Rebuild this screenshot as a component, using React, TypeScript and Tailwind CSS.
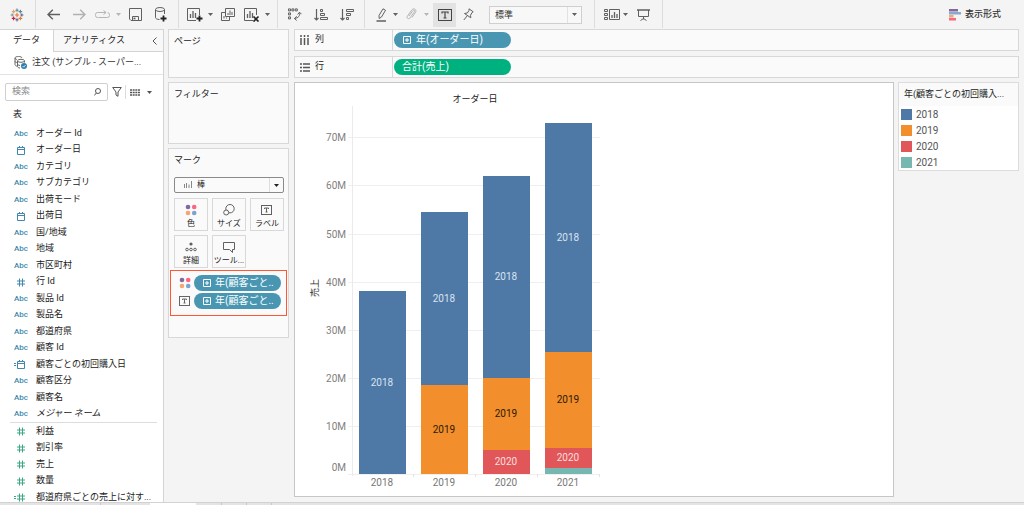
import type { ReactNode } from "react";

type IconProps = { w: number; h: number; className?: string; children: ReactNode };

function Icon({ w, h, className = "", children }: IconProps) {
  return (
    <svg
      width={w}
      height={h}
      viewBox={`0 0 ${w} ${h}`}
      fill="none"
      stroke="currentColor"
      strokeWidth="1"
      aria-hidden="true"
      className={`shrink-0 ${className}`}
    >
      {children}
    </svg>
  );
}

const Caret = ({ className = "" }: { className?: string }) => (
  <Icon w={5} h={3} className={className}>
    <path d="M0 0h5L2.5 3z" fill="currentColor" stroke="none" />
  </Icon>
);

const plusPoints: [number, number, number, string][] = [
  [7, 7, 2.2, "#e8762d"],
  [7, 2.2, 1.6, "#5b879b"],
  [7, 11.8, 1.6, "#5b6591"],
  [2.2, 7, 1.6, "#7099a5"],
  [11.8, 7, 1.6, "#5b6591"],
  [3.6, 3.6, 1.8, "#e8a05a"],
  [10.4, 3.6, 1.8, "#5b879b"],
  [3.6, 10.4, 1.8, "#c72035"],
  [10.4, 10.4, 1.8, "#e8762d"],
];

const Logo = () => (
  <Icon w={14} h={14}>
    {plusPoints.map(([x, y, r, c]) => (
      <path key={`${x}-${y}`} d={`M${x - r} ${y}h${r * 2}M${x} ${y - r}v${r * 2}`} stroke={c} strokeWidth="1.1" />
    ))}
  </Icon>
);

const ColorDots = () => (
  <Icon w={12} h={12}>
    <g stroke="none">
      <circle cx="3" cy="3" r="2.3" fill="#85689b" />
      <circle cx="9.2" cy="3" r="2.3" fill="#fb6680" />
      <circle cx="3" cy="9" r="2.3" fill="#f6a571" />
      <circle cx="9.2" cy="9" r="2.3" fill="#7ba3d0" />
    </g>
  </Icon>
);

const TextBox = () => (
  <Icon w={12} h={10}>
    <rect x="0.5" y="0.5" width="10" height="9" />
    <path d="M3.5 4V3h4v1M5.5 3v4M4.5 7h2" />
  </Icon>
);

function Separator() {
  return <span className="h-7 w-px shrink-0 self-start bg-[#dcdcdc]" />;
}

type ToolProps = { label: string; className?: string; children: ReactNode };
function Tool({ label, className = "", children }: ToolProps) {
  return (
    <button type="button" aria-label={label} className={`flex h-6 shrink-0 items-center ${className}`}>
      {children}
    </button>
  );
}

function Toolbar() {
  return (
    <header className="flex h-[29px] shrink-0 items-center text-[#606060]">
      <Tool label="スタート ページ" className="w-[35px] pl-2.5"><Logo /></Tool>
      <Separator />
      <Tool label="元に戻す" className="ml-[11px] w-3">
        <Icon w={13} h={11}><path d="M13 5.5H1M5.8 .7L1 5.5l4.8 4.8" strokeWidth="1.4" /></Icon>
      </Tool>
      <Tool label="やり直し" className="ml-3.5 w-3 text-[#b0b0b0]">
        <Icon w={13} h={11}><path d="M0 5.5h12M7.2 .7L12 5.5l-4.8 4.8" strokeWidth="1.3" /></Icon>
      </Tool>
      <Tool label="再生" className="ml-2.5 w-[26px] justify-between text-[#b5b5b5]">
        <Icon w={15} h={10}><path d="M3.5 7.500H2.500a2 2 0 0 1-2-2v-1a2 2 0 0 1 2-2h8.500M8.500 .5l2.500 2-2.500 2M12.500 2.700a2 2 0 0 1 2 2v.8a2 2 0 0 1-2 2H3.500" /></Icon>
        <Caret />
      </Tool>
      <Tool label="保存" className="ml-2 w-[13px]">
        <Icon w={13} h={13}>
          <path d="M.5 .5h12v12H2L.5 11z" />
          <path d="M3.5 12V8.5h6V12" />
          <path d="M4.5 10.5h2" strokeWidth="1.6" />
        </Icon>
      </Tool>
      <Tool label="新しいデータ ソース" className="ml-[13px] w-3">
        <Icon w={12} h={15}>
          <ellipse cx="5" cy="2.5" rx="4.5" ry="2" />
          <path d="M.5 2.5v8c0 1 1.5 1.9 4 2M9.500 2.500V7" />
          <path d="M8.500 8.500v6M5.500 11.500h6" stroke="#222" strokeWidth="1.8" />
        </Icon>
      </Tool>
      <span className="w-[11px]" />
      <Separator />
      <Tool label="新しいワークシート" className="ml-2 w-[26px] justify-between">
        <Icon w={16} h={14}>
          <path d="M9 12.5H.5V.5h12V7" />
          <path d="M3.5 10V6M6 10V3M8.500 10V5" strokeWidth="1.3" />
          <path d="M12.500 7.500v6M9.500 10.500h6" stroke="#222" strokeWidth="1.8" />
        </Icon>
        <Caret />
      </Tool>
      <Tool label="複製" className="ml-2 w-3.5">
        <Icon w={14} h={14}>
          <path d="M4.5 .5h9v8h-9z" />
          <path d="M4.500 4.500h-4v8h8v-4" />
          <path d="M7 7V5M9 7V2.500M11 7V4M3 10.500V8M5.500 10.500v-1" />
        </Icon>
      </Tool>
      <Tool label="シートのクリア" className="ml-[9px] w-[26px] justify-between">
        <Icon w={16} h={14}>
          <path d="M9 12.5H.5V.5h12V7" />
          <path d="M3.5 10V6M6 10V3M8.500 10V5" strokeWidth="1.3" />
          <path d="M9.500 8.500l5 5M14.500 8.500l-5 5" stroke="#222" strokeWidth="1.7" />
        </Icon>
        <Caret />
      </Tool>
      <span className="w-[7px]" />
      <Separator />
      <Tool label="行と列の交換" className="ml-2.5 w-3.5">
        <Icon w={14} h={13}>
          <path d="M.5 .9h2v2h-2zM3.900 .9h2v2h-2zM7.300 .9h2v2h-2zM.5 4.900h2v2h-2zM.5 8.900h2v2h-2z" />
          <path d="M11.500 4.500c.8 3-1 5.500-5 6M9.700 6.500l1.800-2.300 2 2M8.700 8.300l-2.300 2.200 2.300 2" />
        </Icon>
      </Tool>
      <Tool label="昇順で並べ替え" className="ml-3 w-3.5">
        <Icon w={14} h={13}>
          <path d="M2.500 1v11M.5 10l2 2 2-2" strokeWidth="1.200" />
          <path d="M6.500 1.500h2v2h-2zM6.500 5.500h4v2h-4zM6.500 9.500h7v2h-7z" />
        </Icon>
      </Tool>
      <Tool label="降順で並べ替え" className="ml-3 w-3.5">
        <Icon w={14} h={13}>
          <path d="M2.500 1v11M.5 10l2 2 2-2" strokeWidth="1.200" />
          <path d="M6.500 1.500h7v2h-7zM6.500 5.500h4v2h-4zM6.500 9.500h2v2h-2z" />
        </Icon>
      </Tool>
      <span className="w-2.5" />
      <Separator />
      <Tool label="ハイライト" className="ml-[11px] w-[22px] justify-between">
        <Icon w={11} h={14}>
          <path d="M3 7.500L7 .8l2.500 1.500-4 6.700-2.300 1.500z" />
          <path d="M.5 13h9.500" strokeWidth="1.500" />
        </Icon>
        <Caret />
      </Tool>
      <Tool label="グループ" className="ml-2 w-[23px] justify-between text-[#b5b5b5]">
        <Icon w={11} h={13}>
          <path d="M3 8l4-5.500c.7-1 2.200 0 1.500 1L4 10c-1.300 1.600-3.800.2-2.700-1.600l4.500-6.500C7.500-.3 11 1.500 9.700 4L6 9.500" />
        </Icon>
        <Caret />
      </Tool>
      <Tool label="マーク ラベルの表示" className="ml-1 w-[23px] justify-center bg-[#e2e2e2] text-[#444]">
        <Icon w={14} h={12}>
          <rect x=".5" y=".5" width="13" height="11" />
          <path d="M4 4.500V3h6v1.500M7 3v6M5.500 9h3" strokeWidth="1.200" />
        </Icon>
      </Tool>
      <Tool label="軸の固定" className="ml-[7px] w-[11px]">
        <Icon w={11} h={13}>
          <path d="M6 .8l4.200 3-1.200.7-1.500 2.800.3 2.500L1.500 5.500l2.800-.5 1.700-2.500zM4.500 7.500L.8 12" />
        </Icon>
      </Tool>
      <div className="relative ml-[15px] h-[18px] w-[93px] shrink-0 border border-[#cfcfcf] bg-[#f8f8f8]">
        <select aria-label="表示サイズ" className="block h-4 w-full appearance-none px-[5px] text-[9px] leading-4 text-[#333]">
          <option>標準</option>
        </select>
        <span className="pointer-events-none absolute inset-y-0 right-0 flex w-3.5 items-center justify-center border-l border-[#e2e2e2]">
          <Caret />
        </span>
      </div>
      <span className="w-3" />
      <Separator />
      <Tool label="カードの表示/非表示" className="ml-[9px] w-6 justify-between">
        <Icon w={16} h={12}>
          <path d="M.5 .5h3v2h-3zM.5 4.500h3v2h-3zM.5 8.500h3v2h-3z" />
          <path d="M5.500 .5h10v10h-10z" />
          <path d="M8 9V6M10.500 9V3M13 9V5" strokeWidth="1.300" />
        </Icon>
        <Caret />
      </Tool>
      <Tool label="プレゼンテーション モード" className="ml-[9px] w-[13px]">
        <Icon w={13} h={12}>
          <path d="M0 1h13" strokeWidth="1.500" />
          <path d="M1.500 1v6.500h10V1M6.500 7.500v3M3.500 11.500l3-2 3 2" />
        </Icon>
      </Tool>
      <span className="w-3" />
      <Separator />
      <button type="button" className="mr-[23px] ml-auto flex h-6 items-center gap-1 text-[9px] font-medium text-[#333]">
        <Icon w={12} h={12}>
          <g stroke="none">
            <path d="M0 0h9v2.500H0z" fill="#85689b" />
            <path d="M0 3h12v2.500H0z" fill="#86a9d0" />
            <path d="M0 6h4.500v2.500H0z" fill="#f6a571" />
            <path d="M0 9h7v2.500H0z" fill="#fb6680" />
          </g>
        </Icon>
        表示形式
      </button>
    </header>
  );
}

type Kind = "text" | "date" | "calcDate" | "number" | "calcNumber";
type Field = { name: string; kind: Kind; italic?: boolean };

const dimensions: Field[] = [
  { name: "オーダー Id", kind: "text" },
  { name: "オーダー日", kind: "date" },
  { name: "カテゴリ", kind: "text" },
  { name: "サブカテゴリ", kind: "text" },
  { name: "出荷モード", kind: "text" },
  { name: "出荷日", kind: "date" },
  { name: "国/地域", kind: "text" },
  { name: "地域", kind: "text" },
  { name: "市区町村", kind: "text" },
  { name: "行 Id", kind: "number" },
  { name: "製品 Id", kind: "text" },
  { name: "製品名", kind: "text" },
  { name: "都道府県", kind: "text" },
  { name: "顧客 Id", kind: "text" },
  { name: "顧客ごとの初回購入日", kind: "calcDate" },
  { name: "顧客区分", kind: "text" },
  { name: "顧客名", kind: "text" },
  { name: "メジャー ネーム", kind: "text", italic: true },
];

const measures: Field[] = [
  { name: "利益", kind: "number" },
  { name: "割引率", kind: "number" },
  { name: "売上", kind: "number" },
  { name: "数量", kind: "number" },
  { name: "都道府県ごとの売上に対す...", kind: "calcNumber" },
];

function FieldIcon({ kind }: { kind: Kind }) {
  if (kind === "text") return <span className="text-[8px] font-medium">Abc</span>;
  const calculated = kind === "calcDate" || kind === "calcNumber";
  const date = kind === "date" || kind === "calcDate";
  return (
    <Icon w={14} h={9}>
      {calculated && <path d="M0 3.500h2M0 5.500h2" />}
      {date ? (
        <path d="M3.500 1.500h7v7h-7zM3.500 3.500h7M5.500 0v2M8.500 0v2" />
      ) : (
        <path d="M3 3h8M3 6h8M5.500 .5v8M8.500 .5v8" />
      )}
    </Icon>
  );
}

function FieldList({ fields, tone }: { fields: Field[]; tone: string }) {
  return (
    <ul>
      {fields.map((f) => (
        <li key={f.name} className="flex items-center odd:h-[17px] even:h-4">
          <span className={`flex w-[42px] shrink-0 justify-center ${tone}`}>
            <FieldIcon kind={f.kind} />
          </span>
          <span className={`-ml-1.5 whitespace-nowrap ${f.italic ? "italic" : ""}`}>{f.name}</span>
        </li>
      ))}
    </ul>
  );
}

function DataPane() {
  return (
    <aside className="flex w-[164px] shrink-0 flex-col overflow-hidden border-t border-r border-[#d4d4d4] bg-white text-[9px] text-[#222]">
      <div className="flex h-[22px] shrink-0">
        <button type="button" className="w-[53px] shrink-0 text-[#222]">データ</button>
        <button type="button" className="flex flex-1 items-center justify-between border-b border-l border-[#d4d4d4] bg-[#f8f8f8] pr-1.5 pl-[9px] text-[#222]">
          アナリティクス
          <Icon w={5} h={8} className="text-[#555]"><path d="M4.500 .5L1 4l3.500 3.500" /></Icon>
        </button>
      </div>
      <div className="flex h-[23px] shrink-0 items-center gap-1 border-b border-[#e4e4e4] pl-3.5 text-[#333]">
        <Icon w={14} h={14} className="text-[#666]">
          <path d="M1 2v6.500c0 1 1 1.500 2 1.700M1 2c0-2 7-2 7 0M1 2c0 1 1 1.400 2 1.500M1 5c0 1 1 1.400 2 1.500" />
          <ellipse cx="7" cy="4.800" rx="3.500" ry="1.500" />
          <path d="M3.500 5v5.500c0 .8 1 1.400 2.500 1.500M10.500 5v1.500M3.500 8c0 .8 1 1.300 2.500 1.400" />
          <circle cx="10" cy="10" r="3" fill="#2f7fae" stroke="none" />
          <path d="M8.500 10l1.200 1.200L11.600 9" stroke="#fff" strokeWidth=".8" />
        </Icon>
        <span className="whitespace-nowrap">注文 (サンプル - スーパー...</span>
      </div>
      <div className="mt-2 flex h-[18px] shrink-0 items-center pl-[5px] text-[#555]">
        <label className="flex h-full w-[103px] items-center rounded-xs border border-[#cfcfcf] pr-1.5 pl-1.5">
          <input type="text" aria-label="検索" placeholder="検索" className="w-0 flex-1 text-[9px] outline-none placeholder:text-[#888]" />
          <Icon w={7} h={8}><circle cx="4" cy="3" r="2.500" /><path d="M2.300 5L.3 7.500" /></Icon>
        </label>
        <button type="button" aria-label="フィルター" className="ml-0.5 flex w-[14px] justify-center">
          <Icon w={10} h={10}><path d="M.7 .5h8.600L6 5v4.300L4 8V5z" /></Icon>
        </button>
        <span className="ml-px h-3.5 w-px bg-[#ddd]" />
        <button type="button" aria-label="表示オプション" className="ml-1 flex items-center gap-[7px]">
          <Icon w={10} h={7}><path d="M0 1h10M0 3.500h10M0 6h10" strokeDasharray="2 .66" strokeWidth="1.500" /></Icon>
          <Caret />
        </button>
      </div>
      <h2 className="mt-[5px] h-[17px] shrink-0 pl-[13px] text-[9px] leading-[17px]">表</h2>
      <div className="pt-0.5">
        <FieldList fields={dimensions} tone="text-[#4088ac]" />
        <hr className="mr-1.5 ml-2.5 border-[#ddd]" />
        <FieldList fields={measures} tone="text-[#3aa981]" />
      </div>
    </aside>
  );
}

function ExpandMark() {
  return (
    <Icon w={8} h={8}>
      <path d="M.5 .5h7v7h-7zM2 4h4M4 2v4" />
    </Icon>
  );
}

function Card({ title, className, children }: { title: string; className: string; children?: ReactNode }) {
  return (
    <section className={`border border-[#d8d8d8] bg-[#fafafa] pr-1 pl-[5px] ${className}`}>
      <h2 className="pt-1 text-[9px] leading-[14px] text-[#222]">{title}</h2>
      {children}
    </section>
  );
}

function MarkButton({ label, children }: { label: string; children: ReactNode }) {
  return (
    <button type="button" className="flex h-[33px] flex-col items-center justify-between border border-[#d8d8d8] bg-[#fafafa] pt-[5px] text-[#606060]">
      <span className="flex h-3 items-center">{children}</span>
      <span className="text-[8px] leading-3 whitespace-nowrap text-[#222]">{label}</span>
    </button>
  );
}

function MarkPill({ children }: { children: ReactNode }) {
  return (
    <div className="flex h-4 items-center gap-[3px] pr-[5px] pl-2 text-[#666]">
      {children}
      <span className="flex h-4 flex-1 items-center gap-1 rounded-full bg-[#4996b2] pl-[9px] text-[10px] leading-4 whitespace-nowrap text-white">
        <ExpandMark />
        年(顧客ごと..
      </span>
    </div>
  );
}

function MarksColumn() {
  return (
    <div className="flex w-[121px] shrink-0 flex-col gap-1">
      <Card title="ページ" className="h-[49px]" />
      <Card title="フィルター" className="h-[62px]" />
      <Card title="マーク" className="h-[190px]">
        <div className="relative mt-2.5 h-4 rounded-xs border border-[#8a8a8a] bg-[#fafafa]">
          <select aria-label="マーク タイプ" className="block h-3.5 w-full appearance-none pl-[22px] text-[8px] leading-3.5 text-[#222]">
            <option>棒</option>
          </select>
          <Icon w={8} h={7} className="pointer-events-none absolute top-[3px] left-[9px] text-[#888]">
            <path d="M.5 7V3M2.500 7V2M5 7V3.500M7.500 7V0" />
          </Icon>
          <span className="pointer-events-none absolute inset-y-0 right-0 flex w-3.5 items-center justify-center border-l border-[#ddd] text-[#222]">
            <Caret />
          </span>
        </div>
        <div className="mt-[5px] grid grid-cols-3 gap-1">
          <MarkButton label="色"><ColorDots /></MarkButton>
          <MarkButton label="サイズ">
            <Icon w={12} h={12}>
              <circle cx="7" cy="4.700" r="4.200" />
              <circle cx="3.200" cy="8.500" r="2.500" fill="#fafafa" />
            </Icon>
          </MarkButton>
          <MarkButton label="ラベル"><TextBox /></MarkButton>
          <MarkButton label="詳細">
            <Icon w={12} h={10}>
              <circle cx="6" cy="2" r="1.600" fill="currentColor" stroke="none" />
              <circle cx="2" cy="7.500" r="1.300" />
              <circle cx="6" cy="7.500" r="1.300" />
              <circle cx="10" cy="7.500" r="1.300" />
            </Icon>
          </MarkButton>
          <MarkButton label="ツール...">
            <Icon w={12} h={11}><path d="M.5 .5h11v7H9.500v3l-3-3h-6z" /></Icon>
          </MarkButton>
        </div>
        <div className="-mr-[3px] -ml-1 mt-0.5 flex flex-col gap-0.5 border border-[#ff5733] pt-1 pb-1.5">
          <MarkPill><ColorDots /></MarkPill>
          <MarkPill><TextBox /></MarkPill>
        </div>
      </Card>
    </div>
  );
}

function Shelf({ label, icon, children }: { label: string; icon: ReactNode; children: ReactNode }) {
  return (
    <div className="flex h-[22px] items-stretch border border-[#d8d8d8] bg-[#fafafa]">
      <div className="flex w-[98px] items-center border-r border-[#d8d8d8] pl-[5px] text-[9px] text-[#222]">
        <span className="w-[15px] text-[#555]">{icon}</span>
        {label}
      </div>
      <div className="flex items-center pl-px">{children}</div>
    </div>
  );
}

const BLUE = "#4e79a7";
const ORANGE = "#f28e2b";
const RED = "#e15759";
const TEAL = "#76b7b2";

type Segment = { year: string; value: number; color: string; ink?: string };
const stacks: { year: string; segments: Segment[] }[] = [
  { year: "2018", segments: [{ year: "2018", value: 38, color: BLUE, ink: "#d9e3ee" }] },
  {
    year: "2019",
    segments: [
      { year: "2019", value: 18.5, color: ORANGE, ink: "#2b1a08" },
      { year: "2018", value: 36, color: BLUE, ink: "#d9e3ee" },
    ],
  },
  {
    year: "2020",
    segments: [
      { year: "2020", value: 4.9, color: RED, ink: "#fadfdf" },
      { year: "2019", value: 15, color: ORANGE, ink: "#2b1a08" },
      { year: "2018", value: 42.1, color: BLUE, ink: "#d9e3ee" },
    ],
  },
  {
    year: "2021",
    segments: [
      { year: "2021", value: 1.2, color: TEAL },
      { year: "2020", value: 4.3, color: RED, ink: "#fadfdf" },
      { year: "2019", value: 19.9, color: ORANGE, ink: "#2b1a08" },
      { year: "2018", value: 47.6, color: BLUE, ink: "#d9e3ee" },
    ],
  },
];

const LEFT = 57;
const BASE = 391;
const STEP = 62;
const PER_M = 4.81;

function SalesChart() {
  const ticks = [0, 10, 20, 30, 40, 50, 60, 70];
  return (
    <svg width="310" height="413" viewBox="0 0 310 413" className="block text-[10px]" role="img" aria-label="オーダー日ごとの売上">
      <text x="180" y="19" textAnchor="middle" fontSize="9" fill="#222">オーダー日</text>
      <text transform="translate(23 205) rotate(-90)" textAnchor="middle" fontSize="9" fill="#333">売上</text>
      {ticks.map((t) => {
        const y = Math.round(BASE - t * PER_M);
        return (
          <g key={t}>
            <path d={`M${LEFT - 4} ${y + 0.5}h252`} stroke="#efefef" />
            <text x="51" y={t === 0 ? y - 3 : y + 4} textAnchor="end" fill="#808080">{t}M</text>
          </g>
        );
      })}
      <path d={`M${LEFT + 0.5} 23V${BASE + 2}`} stroke="#ebebeb" />
      {stacks.map((stack, i) => {
        const x = LEFT + 7 + i * STEP;
        let total = 0;
        return (
          <g key={stack.year}>
            <path d={`M${LEFT + (i + 1) * STEP - 0.5} ${BASE}v3`} stroke="#e2e2e2" />
            {stack.segments.map((s) => {
              const bottom = Math.round(BASE - total * PER_M);
              total += s.value;
              const top = Math.round(BASE - total * PER_M);
              return (
                <g key={s.year}>
                  <rect x={x} y={top} width="47" height={bottom - top} fill={s.color} />
                  {s.ink && (
                    <text x={x + 23} y={Math.round((top + bottom) / 2) + 3} textAnchor="middle" fill={s.ink}>{s.year}</text>
                  )}
                </g>
              );
            })}
            <text x={x + 23} y={BASE + 12} textAnchor="middle" fill="#777">{stack.year}</text>
          </g>
        );
      })}
    </svg>
  );
}

function Legend() {
  const items: [string, string][] = [
    ["2018", "bg-[#4e79a7]"],
    ["2019", "bg-[#f28e2b]"],
    ["2020", "bg-[#e15759]"],
    ["2021", "bg-[#76b7b2]"],
  ];
  return (
    <section className="w-[121px] shrink-0 self-start border border-[#dcdcdc] bg-white">
      <h2 className="h-[23px] bg-[#fafafa] pl-[5px] text-[9px] leading-[23px] whitespace-nowrap text-[#222]">
        年(顧客ごとの初回購入...
      </h2>
      <ul>
        {items.map(([name, swatch]) => (
          <li key={name} className="flex h-4 items-center gap-1 pl-0.5 text-[10px] text-[#555]">
            <span className={`h-[11px] w-[11px] ${swatch}`} />
            {name}
          </li>
        ))}
      </ul>
    </section>
  );
}

export default function App() {
  return (
    <div className="flex h-screen flex-col overflow-hidden bg-[#f4f4f4] font-[Roboto,'Noto_Sans_CJK_JP',sans-serif] text-[#333]">
      <Toolbar />
      <div className="flex min-h-0 flex-1 gap-1">
        <DataPane />
        <MarksColumn />
        <main className="mr-[5px] ml-px flex min-w-0 flex-1 flex-col pb-[5px]">
          <div className="flex flex-col gap-[5px]">
            <Shelf
              label="列"
              icon={<Icon w={9} h={10}><path d="M1 0v2M4.500 0v2M8 0v2M1 3v7M4.500 3v7M8 3v7" strokeWidth="1.500" /></Icon>}
            >
              <span className="flex h-4 w-[117px] items-center gap-[5px] rounded-full bg-[#4996b2] pl-[9px] text-[10px] leading-4 text-white">
                <ExpandMark />
                年(オーダー日)
              </span>
            </Shelf>
            <Shelf
              label="行"
              icon={<Icon w={10} h={9}><path d="M0 1h2M0 4.500h2M0 8h2M3 1h7M3 4.500h7M3 8h7" strokeWidth="1.500" /></Icon>}
            >
              <span className="flex h-4 w-[117px] items-center rounded-full bg-[#00b180] pl-2 text-[10px] leading-4 text-white">
                合計(売上)
              </span>
            </Shelf>
          </div>
          <div className="mt-1 flex min-h-0 flex-1 gap-1">
            <section className="min-w-0 flex-1 overflow-hidden border border-[#c6c6c6] bg-white">
              <SalesChart />
            </section>
            <Legend />
          </div>
        </main>
      </div>
      <footer className="flex h-[3px] shrink-0 border-t border-[#d2d2d2] bg-[#e4e4e4]">
        <span className="w-[101px] border-r border-[#c8c8c8]" />
        <span className="w-[49px]" />
        <span className="w-[46px] bg-white" />
        <span className="w-[26px] border-r border-[#c8c8c8]" />
        <span className="w-[25px] border-r border-[#c8c8c8]" />
        <span className="w-[25px] border-r border-[#c8c8c8]" />
      </footer>
    </div>
  );
}
